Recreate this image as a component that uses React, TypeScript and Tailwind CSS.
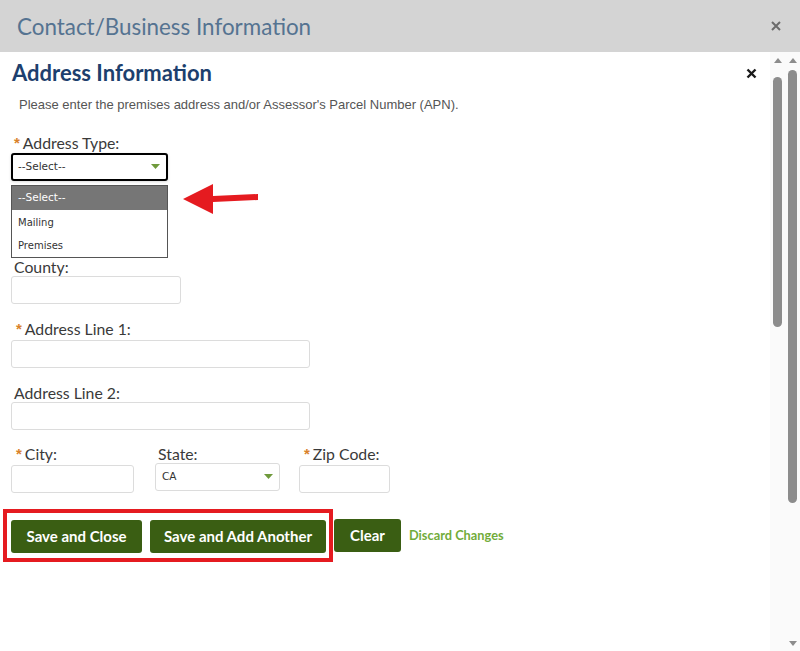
import React from "react";

const Req = () => (
  <span className="text-[15px] leading-[14px] font-bold text-[#d9822b] self-start mt-[2px] mr-[3px]" style={{ fontFamily: "'Liberation Sans', Arial, sans-serif" }}>*</span>
);

const Caret = () => (
  <svg width="9" height="6" viewBox="0 0 9 6" className="absolute right-[6px] top-1/2 -translate-y-1/2">
    <polygon points="0,0 9,0 4.5,5" fill="#6f9a3c" />
  </svg>
);

const Input = ({ w }: { w: string }) => (
  <div className={`${w} h-[28px] border border-[#dcdcdc] rounded-[3px] bg-white`} />
);

export default function App() {
  return (
    <div className="w-[800px] h-[651px] bg-white overflow-hidden flex flex-col" style={{ fontFamily: "Lato, 'Open Sans', sans-serif" }}>
      <header className="h-[52px] shrink-0 bg-[#d4d4d4] flex items-center justify-between pl-[17px] pr-[19px]">
        <h1 className="text-[22.4px] leading-[26px] text-[#557391] pt-[1px]">Contact/Business Information</h1>
        <svg width="10" height="10" viewBox="0 0 10 10">
          <path d="M1 1L9 9M9 1L1 9" stroke="#6b6b6b" strokeWidth="2" />
        </svg>
      </header>
      <div className="flex flex-1 min-h-0">
        <main className="relative flex-1 px-[11px]">
          <div className="flex items-center justify-between mt-[9px] h-[24px]">
            <h2 className="text-[22px] leading-[24px] font-bold text-[#1d3f6e] pl-[1px]">Address Information</h2>
            <svg width="11" height="11" viewBox="0 0 11 11" className="mr-[2px]">
              <path d="M1.5 1.5L9.5 9.5M9.5 1.5L1.5 9.5" stroke="#1a1a1a" strokeWidth="2.4" />
            </svg>
          </div>
          <p className="mt-[12px] pl-[8px] text-[13px] leading-[16px] text-[#555]" style={{ fontFamily: "'Liberation Sans', Arial, sans-serif" }}>
            Please enter the premises address and/or Assessor's Parcel Number (APN).
          </p>

          <div className="mt-[21px] h-[18px] flex pl-[3px] text-[15.8px] leading-[18px] text-[#3a3a3a]">
            <Req />
            <span>Address Type:</span>
          </div>
          <div className="relative mt-[1px] w-[157px] h-[28px] border-2 border-black rounded-[3px] bg-white shadow-[0_1px_3px_rgba(0,0,0,0.15)] flex items-center pl-[5px]" style={{ fontFamily: "'DejaVu Sans', Verdana, sans-serif" }}>
            <span className="text-[10.5px] text-[#333]">--Select--</span>
            <Caret />
            <div className="absolute left-[-2px] top-[30px] w-[157px] border border-[#555] bg-white z-10">
              <div className="h-[24px] bg-[#767676] text-white text-[10.5px] flex items-center pl-[6px]">--Select--</div>
              <div className="h-[24px] text-[#333] text-[10px] flex items-center pl-[6px]">Mailing</div>
              <div className="h-[23px] text-[#333] text-[10px] flex items-center pl-[6px]">Premises</div>
            </div>
          </div>

          <div className="mt-[77px] h-[18px] pl-[3px] text-[15.8px] leading-[18px] text-[#3a3a3a]">County:</div>
          <Input w="w-[170px]" />

          <div className="mt-[16px] h-[18px] flex pl-[5px] text-[15.8px] leading-[18px] text-[#3a3a3a]">
            <Req />
            <span>Address Line 1:</span>
          </div>
          <div className="mt-[2px]">
            <Input w="w-[299px]" />
          </div>

          <div className="mt-[16px] h-[18px] pl-[3px] text-[15.8px] leading-[18px] text-[#3a3a3a]">Address Line 2:</div>
          <Input w="w-[299px]" />

          <div className="mt-[15px] flex">
            <div className="w-[123px]">
              <div className="h-[18px] flex pl-[5px] text-[15.8px] leading-[18px] text-[#3a3a3a]">
                <Req />
                <span>City:</span>
              </div>
              <div className="mt-[2px]">
                <Input w="w-[123px]" />
              </div>
            </div>
            <div className="ml-[21px] w-[125px]">
              <div className="h-[18px] pl-[3px] text-[15.8px] leading-[18px] text-[#3a3a3a]">State:</div>
              <div className="relative w-[125px] h-[28px] border border-[#dcdcdc] rounded-[3px] bg-white flex items-center pl-[6px]" style={{ fontFamily: "'DejaVu Sans', Verdana, sans-serif" }}>
                <span className="text-[10.5px] text-[#333]">CA</span>
                <Caret />
              </div>
            </div>
            <div className="ml-[19px] w-[91px]">
              <div className="h-[18px] flex pl-[5px] text-[15.8px] leading-[18px] text-[#3a3a3a]">
                <Req />
                <span>Zip Code:</span>
              </div>
              <div className="mt-[2px]">
                <Input w="w-[91px]" />
              </div>
            </div>
          </div>

          <div className="mt-[16px] flex items-center">
            <div className="ml-[-8px] border-4 border-[#e51b20] pt-[7px] pb-[5px] pl-[4px] pr-[3px] flex gap-[8px]">
              <button className="w-[131px] h-[33px] rounded-[3px] bg-[#3a5e13] text-white font-bold text-[15px]">Save and Close</button>
              <button className="w-[176px] h-[33px] rounded-[3px] bg-[#3a5e13] text-white font-bold text-[15px]">Save and Add Another</button>
            </div>
            <button className="ml-[1px] w-[67px] h-[33px] rounded-[3px] bg-[#3a5e13] text-white font-bold text-[15px]">Clear</button>
            <span className="ml-[8px] text-[12.8px] font-bold text-[#72ac3a]">Discard Changes</span>
          </div>

          <svg width="80" height="36" viewBox="0 0 80 36" className="absolute left-[180px] top-[129px]">
            <polygon points="3,18 33,3 33,15 78,13 78,19 33,21 33,33" fill="#e51b20" />
          </svg>
        </main>
        <div className="w-[30px] shrink-0 bg-[#fafafa] flex">
          <div className="w-[15px] flex flex-col items-center pt-[6px]">
            <svg width="8" height="5" viewBox="0 0 8 5"><polygon points="4,0 8,5 0,5" fill="#8c8c8c" /></svg>
            <div className="mt-[14px] w-[9px] h-[250px] rounded-full bg-[#8c8c8c]" />
          </div>
          <div className="w-[15px] flex flex-col items-center pt-[6px]">
            <svg width="8" height="5" viewBox="0 0 8 5"><polygon points="4,0 8,5 0,5" fill="#8c8c8c" /></svg>
            <div className="mt-[7px] w-[9px] h-[433px] rounded-full bg-[#8c8c8c]" />
            <div className="flex-1" />
            <svg width="8" height="5" viewBox="0 0 8 5" className="mb-[5px]"><polygon points="0,0 8,0 4,5" fill="#8c8c8c" /></svg>
          </div>
        </div>
      </div>
    </div>
  );
}
